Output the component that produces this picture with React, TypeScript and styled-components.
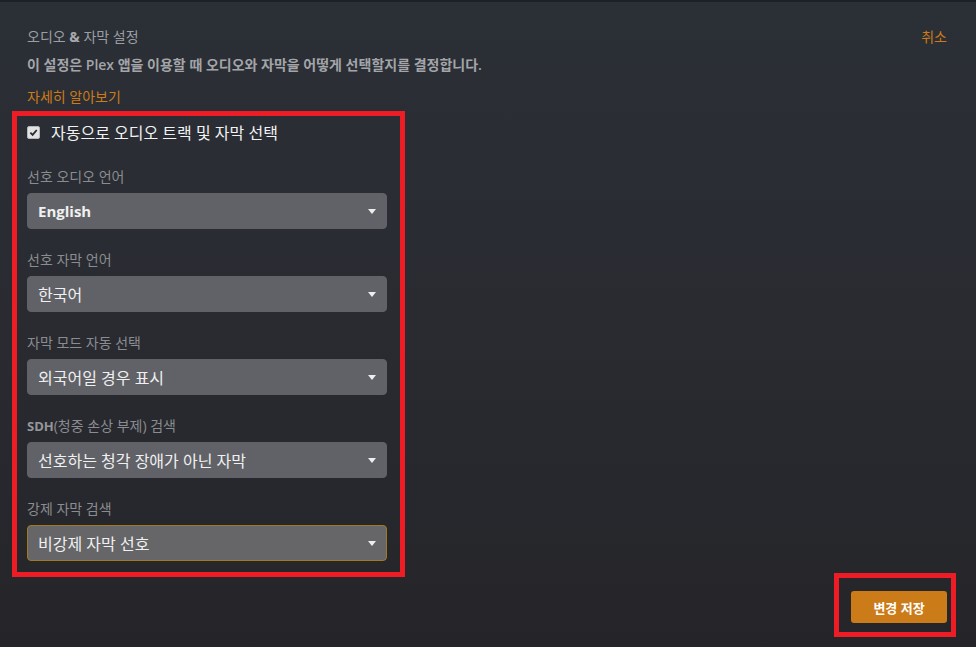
import styled, { createGlobalStyle } from 'styled-components'

const GlobalStyle = createGlobalStyle`
  html, body {
    margin: 0;
    padding: 0;
    background: #26272b;
  }
  body {
    font-family: "Open Sans", "Noto Sans CJK KR", sans-serif;
  }
`

const Page = styled.div({
  width: 976,
  height: 647,
  boxSizing: 'border-box',
  borderTop: '2px solid #1d2025',
  background: 'linear-gradient(180deg, #2b2f36 0%, #292b31 50%, #252529 100%)',
  display: 'flex',
  flexDirection: 'column',
  overflow: 'hidden',
})

const Header = styled.div({
  display: 'flex',
  justifyContent: 'space-between',
  padding: '26px 30px 0 27px',
})

const Intro = styled.div({
  display: 'flex',
  flexDirection: 'column',
})

const Title = styled.div({
  fontSize: 14,
  lineHeight: '18px',
  color: '#9b9ea3',
  b: { color: '#a7a9ad' },
})

const Description = styled.div({
  marginTop: 10,
  fontSize: 14,
  lineHeight: '18px',
  color: '#a3a5a9',
  fontWeight: 600,
})

const LinkText = styled.a({
  marginTop: 14,
  fontSize: 14,
  lineHeight: '18px',
  color: '#cc7b19',
  textDecoration: 'none',
})

const Cancel = styled.a({
  fontSize: 14,
  lineHeight: '18px',
  color: '#cc7b19',
  marginRight: -1,
})

const Highlight = styled.div({
  border: '5px solid #ee1c25',
})

const FormBox = styled(Highlight)({
  marginTop: 5,
  marginLeft: 12,
  width: 393,
  boxSizing: 'border-box',
  padding: '6px 13px 11px 10px',
  display: 'flex',
  flexDirection: 'column',
})

const CheckRow = styled.label({
  display: 'flex',
  alignItems: 'center',
  gap: 11,
  height: 20,
  fontSize: 16,
  color: '#f2f2f2',
  fontWeight: 400,
})

const CheckBox = styled.span({
  width: 11,
  height: 11,
  borderRadius: 2,
  background: '#e1e2e3',
  border: '1px solid #b5b7ba',
  display: 'flex',
  alignItems: 'center',
  justifyContent: 'center',
})

const Field = styled.div<{ $first?: boolean }>(({ $first }) => ({
  marginTop: $first ? 26 : 22,
  display: 'flex',
  flexDirection: 'column',
  gap: 7,
}))

const FieldLabel = styled.div({
  fontSize: 14,
  lineHeight: '18px',
  color: '#8a8c90',
  b: { fontWeight: 700, fontSize: 13, color: '#95979b' },
})

const Select = styled.div<{ $focused?: boolean; $bold?: boolean }>(({ $focused, $bold }) => ({
  height: 36,
  boxSizing: 'border-box',
  borderRadius: 4,
  padding: '0 10px 0 10px',
  display: 'flex',
  alignItems: 'center',
  justifyContent: 'space-between',
  background: $focused ? '#666669' : '#606267',
  border: $focused ? '1px solid #a27a22' : '1px solid #606267',
  color: '#f0f0f0',
  fontSize: $bold ? 15 : 16,
  fontWeight: $bold ? 700 : 400,
}))

const Arrow = styled.span({
  width: 0,
  height: 0,
  borderLeft: '4px solid transparent',
  borderRight: '4px solid transparent',
  borderTop: '5px solid #eeeeee',
})

const Footer = styled.div({
  display: 'flex',
  justifyContent: 'flex-end',
  marginTop: -4,
  paddingRight: 20,
})

const ButtonBox = styled(Highlight)({
  padding: '13px 4px 9px 12px',
})

const SaveButton = styled.button({
  width: 96,
  height: 32,
  border: 'none',
  borderRadius: 3,
  background: '#cc7b19',
  color: '#ffffff',
  fontFamily: 'inherit',
  fontSize: 13,
  fontWeight: 700,
})

const fields = [
  { label: <>선호 오디오 언어</>, value: 'English', bold: true },
  { label: <>선호 자막 언어</>, value: '한국어' },
  { label: <>자막 모드 자동 선택</>, value: '외국어일 경우 표시' },
  { label: <><b>SDH</b>(청중 손상 부제) 검색</>, value: '선호하는 청각 장애가 아닌 자막' },
  { label: <>강제 자막 검색</>, value: '비강제 자막 선호', focused: true },
]

const App = () => {
  return (
    <Page>
      <GlobalStyle />
      <Header>
        <Intro>
          <Title>
            오디오 <b>&amp;</b> 자막 설정
          </Title>
          <Description>이 설정은 Plex 앱을 이용할 때 오디오와 자막을 어떻게 선택할지를 결정합니다.</Description>
          <LinkText>자세히 알아보기</LinkText>
        </Intro>
        <Cancel>취소</Cancel>
      </Header>
      <FormBox>
        <CheckRow>
          <CheckBox>
            <svg width="9" height="9" viewBox="0 0 10 10">
              <path d="M1.5 5.2 L4 7.6 L8.6 2.2" fill="none" stroke="#2a2a2a" strokeWidth="2" />
            </svg>
          </CheckBox>
          자동으로 오디오 트랙 및 자막 선택
        </CheckRow>
        {fields.map((f, i) => (
          <Field key={i} $first={i === 0}>
            <FieldLabel>{f.label}</FieldLabel>
            <Select $bold={f.bold} $focused={f.focused}>
              {f.value}
              <Arrow />
            </Select>
          </Field>
        ))}
      </FormBox>
      <Footer>
        <ButtonBox>
          <SaveButton>변경 저장</SaveButton>
        </ButtonBox>
      </Footer>
    </Page>
  )
}

export default App
